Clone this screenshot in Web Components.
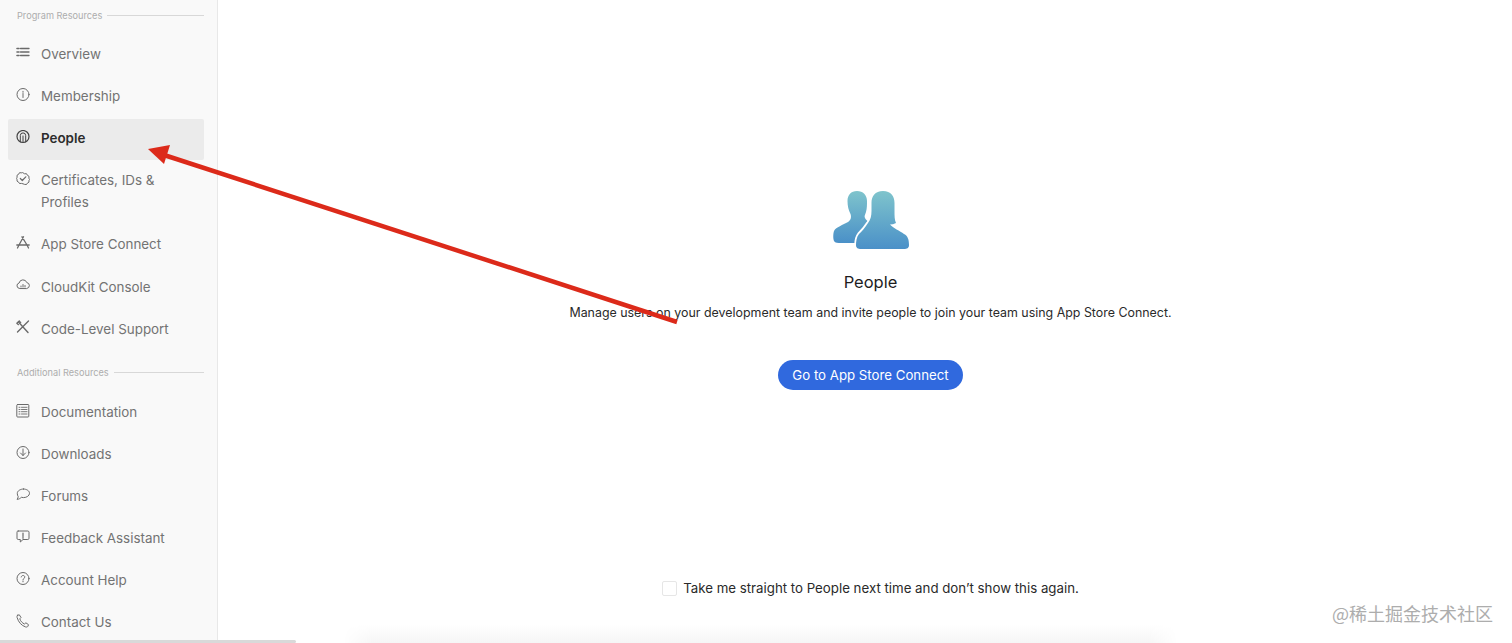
<!DOCTYPE html>
<html>
<head>
<meta charset="utf-8">
<title>People</title>
<style>
  html, body { margin: 0; height: 100%; background: #fff; }
  body { font-family: Inter, "Liberation Sans", sans-serif; overflow: hidden; }
</style>
</head>
<body>
<dev-page>
  <side-nav slot="nav">
    <nav-label>Program Resources</nav-label>
    <nav-item icon="list">Overview</nav-item>
    <nav-item icon="info">Membership</nav-item>
    <nav-item icon="people" active>People</nav-item>
    <nav-item icon="badge">Certificates, IDs &amp; Profiles</nav-item>
    <nav-item icon="appstore">App Store Connect</nav-item>
    <nav-item icon="cloud">CloudKit Console</nav-item>
    <nav-item icon="tools">Code-Level Support</nav-item>
    <nav-label>Additional Resources</nav-label>
    <nav-item icon="doc">Documentation</nav-item>
    <nav-item icon="download">Downloads</nav-item>
    <nav-item icon="bubble">Forums</nav-item>
    <nav-item icon="feedback">Feedback Assistant</nav-item>
    <nav-item icon="help">Account Help</nav-item>
    <nav-item icon="phone">Contact Us</nav-item>
  </side-nav>
  <people-panel slot="main">
    <span slot="title">People</span>
    <span slot="text">Manage users on your development team and invite people to join your team using App Store Connect.</span>
    <span slot="action">Go to App Store Connect</span>
    <span slot="skip">Take me straight to People next time and don’t show this again.</span>
  </people-panel>
</dev-page>
<red-arrow></red-arrow>
<water-mark>@稀土掘金技术社区</water-mark>

<script>
const ICONS = {
  list: `<path d="M1 2.500h2M1 6h2M1 9.500h2" stroke-width="1.600"/><path d="M4.500 2.500H13M4.500 6H13M4.500 9.500H13" stroke-width="1.300"/>`,
  info: `<circle cx="7" cy="6.500" r="6"/><path d="M7 5.500v4M7 3.300v1"/>`,
  people: `<circle cx="7" cy="6.500" r="6" stroke-width="1.200"/><path d="M4.300 11.500V5.600a2.700 2.700 0 0 1 5.400 0v5.900M7 12V6" stroke-width="1"/>`,
  badge: `<path d="M7 .8l1.600 1 1.900-.1.900 1.600 1.600 1-.1 1.900.6 1.300-.6 1.300.1 1.300-1.600 1-.9 1.400-1.900-.1L7 11.800l-1.600-.4-1.900.1-.9-1.400-1.600-1 .1-1.300L.6 6.500l.5-1.300-.1-1.900 1.600-1 .9-1.600 1.900.1z"/><path d="M4.300 6.500l2 2 3.500-3.700" stroke-width="1.200"/>`,
  appstore: `<path d="M7.500 .8L3 9M6 .8L11 9M.8 9h12.400M3 9l-1.500 3M11 9l1.500 3" stroke-width="1.300"/>`,
  cloud: `<path d="M3.500 10.500a2.800 2.800 0 0 1-.4-5.500A4 4 0 0 1 10.800 4.600a3 3 0 0 1 .2 5.900z"/><path d="M5 9V8M7 9V6.500M9 9V7.500"/>`,
  tools: `<path d="M2.500 2L12 12.500M12.500 1L1.500 12" stroke-width="1.400"/><path d="M.8 3.200L3.200 1M.8 3.200l1.700 1.500M3.200 1l1.500 1.700" stroke-width="1.200"/>`,
  doc: `<rect x=".8" y=".5" width="12" height="12.500" rx=".8"/><path d="M3 3.300h1M3 5.500h1M3 7.700h1M3 10h1M5.500 3.300h5.500M5.500 5.500h5.500M5.500 7.700h5.500M5.500 10h5.500" stroke-width=".9"/>`,
  download: `<circle cx="7" cy="6.500" r="6"/><path d="M7 3v6.500M4.500 7L7 9.500 9.500 7"/>`,
  bubble: `<path d="M7.500 1c3.200 0 6 1.900 6 4.300s-2.800 4.300-6 4.300c-.8 0-1.500-.1-2.200-.3C4.200 10.500 2.800 11.300 1 11.300c.7-.7 1.200-1.700 1.200-2.700C1.600 7.800 1.300 6.600 1.300 5.300 1.300 2.900 4.300 1 7.500 1z"/>`,
  feedback: `<path d="M2.200 1h9.600c.8 0 1.200.5 1.200 1.200v6.100c0 .7-.4 1.200-1.200 1.200H7L4.300 12V9.500H2.200C1.400 9.500 1 9 1 8.300V2.200C1 1.500 1.400 1 2.200 1z"/><path d="M7 3v3.400M7 7.300v1" stroke-width="1.200"/>`,
  help: `<circle cx="7" cy="6.500" r="6"/><path d="M5.200 5c.2-1 1-1.500 1.900-1.500 1 0 1.700.7 1.700 1.500 0 1.300-1.800 1.300-1.800 2.700M7 9v.8"/>`,
  phone: `<path d="M1.500 1.300L3.300.8 5 3.500 3.800 4.800c.6 2.200 2.500 4.300 4.700 5.200l1.400-1.200 2.600 1.900-.6 1.600c-.4.700-1.500.9-2.400.6C5.500 11.500 2.500 8.300 1.100 3.500.9 2.700 1 1.800 1.500 1.300z"/>`
};

class DevPage extends HTMLElement {
  constructor() {
    super();
    this.attachShadow({ mode: "open" }).innerHTML = `
      <style>
        :host { display: flex; height: 643px; overflow: hidden; position: relative; }
        .scroll {
          position: absolute;
          left: 0; bottom: 0;
          width: 296px;
          height: 3px;
          background: #d9d9d9;
          border-radius: 0 2px 2px 0;
        }
      </style>
      <slot name="nav"></slot>
      <slot name="main"></slot>
      <div class="scroll"></div>`;
  }
}

class SideNav extends HTMLElement {
  constructor() {
    super();
    this.attachShadow({ mode: "open" }).innerHTML = `
      <style>
        :host {
          display: flex;
          flex-direction: column;
          flex: none;
          box-sizing: border-box;
          width: 218px;
          height: 643px;
          padding: 0 13px 0 8px;
          background: #f9f9f9;
          border-right: 1px solid #e8e8e8;
          overflow: hidden;
        }
      </style>
      <slot></slot>`;
  }
}

class NavLabel extends HTMLElement {
  constructor() {
    super();
    this.attachShadow({ mode: "open" }).innerHTML = `
      <style>
        :host {
          display: flex;
          flex: none;
          align-items: center;
          gap: 5px;
          box-sizing: border-box;
          height: 41.300px;
          padding: 5px 0 0 9px;
          font-size: 9.200px;
          color: #adadad;
          white-space: nowrap;
        }
        :host(:first-child) { height: 33px; padding: 0 0 3px 9px; }
        i { flex: 1; height: 1px; background: #d8d8d8; }
      </style>
      <slot></slot><i></i>`;
  }
}

class NavItem extends HTMLElement {
  constructor() {
    super();
    const icon = ICONS[this.getAttribute("icon")] || "";
    this.attachShadow({ mode: "open" }).innerHTML = `
      <style>
        :host {
          display: flex;
          flex: none;
          align-items: flex-start;
          gap: 11px;
          padding: 10.050px 8px;
          font-size: 13.400px;
          line-height: 22px;
          color: #737373;
        }
        :host([active]) {
          margin: 1.500px 0 -0.500px;
          padding-top: 8.550px;
          padding-bottom: 10.550px;
          background: #ebebeb;
          border-radius: 2px;
          color: #2c2c2c;
          font-weight: 600;
        }
        :host([active]) svg { stroke: #444; }
        svg {
          flex: none;
          width: 14px;
          height: 14px;
          margin-top: 2.500px;
          fill: none;
          stroke: #6a6a6a;
          stroke-width: 1;
          stroke-linecap: round;
          stroke-linejoin: round;
        }
      </style>
      <svg viewBox="0 0 14 14">${icon}</svg>
      <span><slot></slot></span>`;
  }
}

class PeoplePanel extends HTMLElement {
  constructor() {
    super();
    this.attachShadow({ mode: "open" }).innerHTML = `
      <style>
        :host {
          display: flex;
          flex-direction: column;
          align-items: center;
          flex: 1;
          box-sizing: border-box;
          height: 643px;
          margin-right: -11px;
          padding-top: 190px;
          color: #222;
          position: relative;
        }
        svg { display: block; margin-left: 2px; }
        h2 {
          margin: 20px 0 0;
          font-size: 16.500px;
          font-weight: 400;
          line-height: 24px;
          color: #1d1d1f;
        }
        p {
          margin: 7px 0 0;
          font-size: 12.420px;
          line-height: 24px;
          color: #2a2a2a;
        }
        .go {
          margin-top: 35px;
          box-sizing: border-box;
          height: 30px;
          width: 185px;
          display: flex;
          align-items: center;
          justify-content: center;
          background: #3069de;
          border-radius: 15px;
          color: #fff;
          font-size: 13.250px;
        }
        label {
          margin-top: 188px;
          display: flex;
          align-items: center;
          gap: 6px;
          font-size: 13.270px;
          line-height: 20px;
          color: #2a2a2a;
        }
        label i {
          width: 13px;
          height: 13px;
          background: #fff;
          border: 1px solid #e6e6e6;
          border-radius: 2px;
        }
        .fade {
          position: absolute;
          left: 125px;
          right: 345px;
          bottom: 0;
          height: 18px;
          background: linear-gradient(#fff, #f6f6f6);
          -webkit-mask-image: linear-gradient(90deg, transparent, #000 30px, #000 calc(100% - 30px), transparent);
        }
      </style>
      <svg width="78" height="60" viewBox="0 0 78 60">
        <defs>
          <linearGradient id="g" x1="0" y1="0" x2="0" y2="1">
            <stop offset="0" stop-color="#7fc4cc"/>
            <stop offset="1" stop-color="#4a90c8"/>
          </linearGradient>
        </defs>
        <path fill="url(#g)" d="M24 1C18 1 14.500 5 14.500 11C14.500 16 15.500 20 17.500 24C18.500 27 18 30 15 32C10 35 3 37 1 41C0 44 0 49 1 51C2 53 5 53 8 53H30L42 34C38 33 33 31 32 28C31 26 32 25 33 22C34 18 34 15 34 11C34 5 30 1 24 1Z"/>
        <path fill="url(#g)" stroke="#fff" stroke-width="3.500" paint-order="stroke" d="M50 1C42 1 38.500 6 38.500 13V21C38.500 26 37.500 30 35 33C32 38 28 42 26 44C23.500 47 23 52 23 55C23 58 25 59 28 59H71C74 59 76 58 76 55C76 50 75 46 71 44C67 41 60 38 57 34.500C59 34.500 61 34 63 33C61.500 30 61.500 26 61.500 21V13C61.500 6 58 1 50 1Z"/>
      </svg>
      <h2><slot name="title"></slot></h2>
      <p><slot name="text"></slot></p>
      <div class="go"><slot name="action"></slot></div>
      <label><i></i><slot name="skip"></slot></label>
      <div class="fade"></div>`;
  }
}

// annotation drawn on top of the screenshot
class RedArrow extends HTMLElement {
  constructor() {
    super();
    this.attachShadow({ mode: "open" }).innerHTML = `
      <style>
        :host { position: absolute; inset: 0; pointer-events: none; }
        svg { display: block; }
      </style>
      <svg width="1512" height="643" viewBox="0 0 1512 643">
        <path d="M677 322L164 155" stroke="#dc2a1a" stroke-width="4.500" fill="none"/>
        <path d="M148 149L170 145L164 164Z" fill="#dc2a1a"/>
      </svg>`;
  }
}

class WaterMark extends HTMLElement {
  constructor() {
    super();
    this.attachShadow({ mode: "open" }).innerHTML = `
      <style>
        :host {
          position: absolute;
          left: 1332px;
          top: 601px;
          font-family: "Noto Sans CJK SC", Inter, sans-serif;
          font-size: 18px;
          line-height: 24px;
          color: #adadad;
          white-space: nowrap;
        }
      </style>
      <slot></slot>`;
  }
}

customElements.define("dev-page", DevPage);
customElements.define("side-nav", SideNav);
customElements.define("nav-label", NavLabel);
customElements.define("nav-item", NavItem);
customElements.define("people-panel", PeoplePanel);
customElements.define("red-arrow", RedArrow);
customElements.define("water-mark", WaterMark);
</script>
</body>
</html>
